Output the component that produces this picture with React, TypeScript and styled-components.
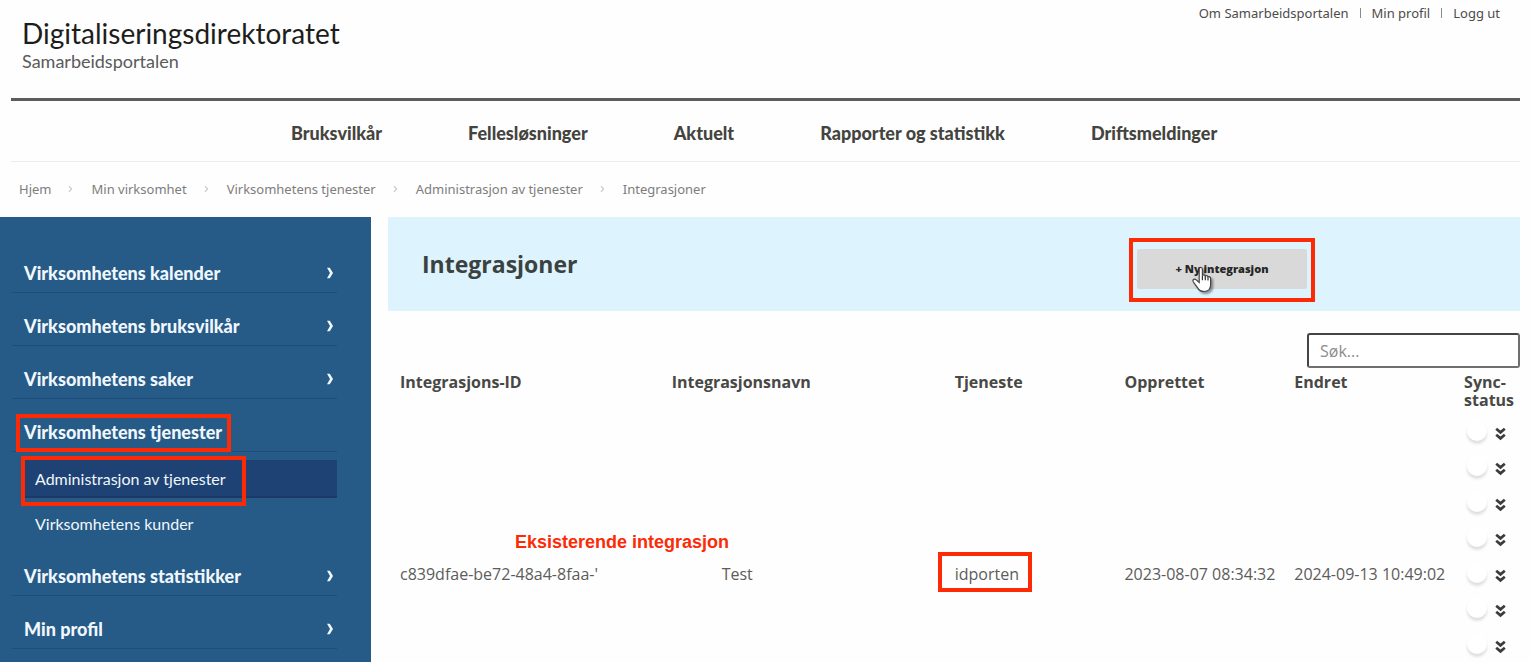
import React from "react";
import styled, { createGlobalStyle, css } from "styled-components";

const geo = `Lato, "Open Sans", sans-serif`;
const sans = `"Open Sans", "Noto Sans", sans-serif`;
const small = `"Noto Sans", "Open Sans", sans-serif`;
const red = "#fc2a05";

const GlobalStyle = createGlobalStyle`
  *, *::before, *::after { box-sizing: border-box; }
  body { margin: 0; background: #fefefe; color: #44443f; font-family: ${sans}; }
  a { color: inherit; text-decoration: none; }
  ul, ol { list-style: none; margin: 0; padding: 0; }
  h1, h2, p { margin: 0; }
`;

const Page = styled.div`
  display: flex;
  flex-direction: column;
  min-height: 100vh;
`;

const Header = styled.header`
  display: flex;
  justify-content: space-between;
  align-items: flex-start;
  margin: 0 10px 0 11px;
  height: 101px;
  border-bottom: 3px solid #5c5c5e;
`;

const Brand = styled.a`
  display: flex;
  flex-direction: column;
  padding: 17px 0 0 11px;
  font-family: ${geo};
`;

const BrandName = styled.span`
  font-size: 28px;
  line-height: 32px;
  color: #1d1d1b;
`;

const BrandSub = styled.span`
  font-size: 18px;
  line-height: 24px;
  color: #5a5a5a;
`;

const TopLinks = styled.ul`
  display: flex;
  padding: 3px 20px 0 0;
  font-family: ${small};
  font-size: 13px;
  line-height: 20px;
  color: #4c4c4a;
`;

const TopLink = styled.li`
  display: flex;
  align-items: center;
  & + &::before {
    content: "";
    width: 1px;
    height: 10px;
    margin: 0 11px;
    background: #8a8a88;
  }
`;

const MainNav = styled.nav`
  margin: 0 10px 0 11px;
  height: 61px;
  padding: 0 0 0 280px;
  border-bottom: 1px solid #ececec;
`;

const NavList = styled.ul`
  display: flex;
  align-items: center;
  height: 60px;
  padding-top: 3px;
  gap: 86px;
  font: 900 18px/24px ${geo};
  white-space: nowrap;
`;

const Crumbs = styled.ol`
  display: flex;
  align-items: flex-start;
  height: 55px;
  padding: 17px 20px 0 19px;
  font-family: ${small};
  font-size: 13px;
  line-height: 20px;
  color: #7d7d7b;
`;

const Crumb = styled.li`
  display: flex;
  align-items: center;
  svg { margin: 0 18px 0 17px; }
`;

const Columns = styled.div`
  flex: 1;
  display: grid;
  grid-template-columns: 371px minmax(0, 1fr);
  gap: 17px;
`;

const Sidebar = styled.nav`
  background: #265a87;
  padding: 23px 34px 0 12px;
  color: #f0f7fc;
  font-family: ${geo};
`;

const SideLink = styled.a`
  display: flex;
  align-items: center;
  justify-content: space-between;
  height: 53px;
  padding: 14px 3px 0 12px;
  border-bottom: 1px solid #1f4d7b;
  font-size: 18px;
  line-height: 24px;
  font-weight: 900;
`;

const SubList = styled.ul`
  display: grid;
  gap: 7px;
  padding: 8px 0 0 10px;
`;

const SubLink = styled.a<{ $active?: boolean }>`
  display: block;
  height: 38px;
  padding: 7px 0 0 13px;
  font-size: 16px;
  line-height: 24px;
  ${(p) =>
    p.$active &&
    css`
      background: #1e4273;
      border-bottom: 2px solid #1a3966;
    `}
`;

/* Red frame drawn round the marked element without affecting its layout. */
const Marked = styled.span<{ $inset: string }>`
  position: relative;
  &::after {
    content: "";
    position: absolute;
    inset: ${(p) => p.$inset};
    border: 4px solid ${red};
    pointer-events: none;
  }
`;

const Content = styled.main`
  display: flex;
  flex-direction: column;
  padding-right: 10px;
`;

const Banner = styled.div`
  display: flex;
  align-items: center;
  justify-content: space-between;
  height: 94px;
  padding: 0 213px 0 34px;
  background: #ddf4fe;
`;

const Title = styled.h1`
  font-size: 23px;
  line-height: 32px;
  font-weight: 700;
  color: #3b413f;
`;

const ButtonFrame = styled(Marked)`
  display: block;
  margin-top: 9px;
`;

const NewButton = styled.button`
  display: block;
  width: 170px;
  height: 40px;
  padding: 0;
  border: 0;
  border-radius: 2px;
  background: #d9d9d9;
  color: #262626;
  font: 800 11px/16px ${sans};
`;

const Hand = styled.svg`
  position: absolute;
  left: 54px;
  top: 17px;
  filter: drop-shadow(2px 2px 1px rgba(0, 0, 0, 0.4));
`;

const Search = styled.input`
  align-self: flex-end;
  width: 213px;
  height: 35px;
  margin: 22px 0 4px;
  padding: 0 11px;
  border: 2px solid #6f6f6f;
  border-top-color: #444;
  border-left-color: #444;
  border-radius: 3px;
  background: #fff;
  font: 16px/24px ${sans};
  &::placeholder { color: #8c8c8c; opacity: 1; }
`;

const Table = styled.table`
  width: 100%;
  table-layout: fixed;
  border-collapse: collapse;
  font-size: 16px;
  color: #5c5c5a;
`;

const HeadCell = styled.th<{ $w: number }>`
  width: ${(p) => p.$w}%;
  height: 40px;
  padding: 1px 0 0 12px;
  text-align: left;
  vertical-align: top;
  line-height: 18px;
  font-weight: 700;
  color: #484845;
`;

const Row = styled.tr`
  height: 36px;
  &:nth-child(odd) { height: 35px; }
`;

const Cell = styled.td`
  position: relative;
  padding: 8px 0 0 12px;
  vertical-align: top;
  line-height: 24px;
  white-space: nowrap;
`;

const Hidden = styled.span`
  display: inline-block;
  width: 50px;
`;

const Note = styled.strong`
  position: absolute;
  left: 127px;
  top: -24px;
  font: 700 18px/24px "Liberation Sans", Arial, sans-serif;
  color: ${red};
`;

const Status = styled.div`
  display: flex;
  align-items: center;
  height: 27px;
  padding-left: 3px;
  gap: 8px;
`;

const Knob = styled.input`
  appearance: none;
  width: 20px;
  height: 20px;
  margin: -6px 0 0;
  border-radius: 50%;
  background: #fff;
  box-shadow: 0 3px 3px rgba(0, 0, 0, 0.13);
`;

const Expand = styled.button`
  display: flex;
  padding: 0;
  border: 0;
  background: none;
  color: #3c3c3c;
`;

const Arrow = () => (
  <svg width="8" height="12" viewBox="0 0 8 12" aria-hidden="true">
    <path d="M1 .8H3.800L7 6 3.800 11.200H1L4 6z" fill="currentColor" />
  </svg>
);

const CrumbArrow = () => (
  <svg width="5" height="8" viewBox="0 0 5 8" aria-hidden="true">
    <path d="M1 1.2 3.6 4 1 6.8" fill="none" stroke="#c8c8c8" strokeWidth="1.2" />
  </svg>
);

const DoubleDown = () => (
  <svg width="11" height="14" viewBox="0 0 11 14" aria-hidden="true">
    <path
      d="M1.2 1.8 5.5 5.4 9.8 1.8M1.2 7.8 5.5 11.4 9.8 7.8"
      fill="none"
      stroke="currentColor"
      strokeWidth="2.7"
    />
  </svg>
);

const nav = ["Bruksvilkår", "Fellesløsninger", "Aktuelt", "Rapporter og statistikk", "Driftsmeldinger"];
const crumbs = ["Hjem", "Min virksomhet", "Virksomhetens tjenester", "Administrasjon av tjenester", "Integrasjoner"];
const side = [
  "Virksomhetens kalender",
  "Virksomhetens bruksvilkår",
  "Virksomhetens saker",
  "Virksomhetens tjenester",
  "Virksomhetens statistikker",
  "Min profil",
];
const heads: [string, number][] = [
  ["Integrasjons-ID", 24],
  ["Integrasjonsnavn", 25],
  ["Tjeneste", 15],
  ["Opprettet", 15],
  ["Endret", 15],
  ["Sync-status", 6],
];
const existing = {
  id: "c839dfae-be72-48a4-8faa-'",
  name: "Test",
  service: "idporten",
  created: "2023-08-07 08:34:32",
  changed: "2024-09-13 10:49:02",
};
const rows = [null, null, null, null, existing, null, null];

export default function App() {
  return (
    <Page>
      <GlobalStyle />
      <Header>
        <Brand href="#">
          <BrandName>Digitaliseringsdirektoratet</BrandName>
          <BrandSub>Samarbeidsportalen</BrandSub>
        </Brand>
        <TopLinks>
          {["Om Samarbeidsportalen", "Min profil", "Logg ut"].map((t) => (
            <TopLink key={t}><a href="#">{t}</a></TopLink>
          ))}
        </TopLinks>
      </Header>
      <MainNav>
        <NavList>
          {nav.map((t) => <li key={t}><a href="#">{t}</a></li>)}
        </NavList>
      </MainNav>
      <Crumbs>
        {crumbs.map((t, i) => (
          <Crumb key={t}>
            <a href="#">{t}</a>
            {i < crumbs.length - 1 && <CrumbArrow />}
          </Crumb>
        ))}
      </Crumbs>
      <Columns>
        <Sidebar>
          <ul>
            {side.map((t) =>
              t === "Virksomhetens tjenester" ? (
                <li key={t}>
                  <SideLink href="#"><Marked $inset="-6px -9px -8px -8px">{t}</Marked></SideLink>
                  <SubList>
                    <li>
                      <SubLink href="#" $active>
                        <Marked $inset="-13px -20px -18px -14px">Administrasjon av tjenester</Marked>
                      </SubLink>
                    </li>
                    <li><SubLink href="#">Virksomhetens kunder</SubLink></li>
                  </SubList>
                </li>
              ) : (
                <li key={t}>
                  <SideLink href="#">{t}<Arrow /></SideLink>
                </li>
              )
            )}
          </ul>
        </Sidebar>
        <Content>
          <Banner>
            <Title>Integrasjoner</Title>
            <ButtonFrame $inset="-11px -8px -13px -8px">
              <NewButton type="button">+ Ny integrasjon</NewButton>
              <Hand width="22" height="27" viewBox="0 0 22 27" aria-hidden="true">
                <path
                  d="M8.2 16.5V3.4c0-2.6 3.2-2.6 3.2 0v6.2c.6-1.2 2.7-1 2.9.6.7-1 2.5-.7 2.7.8.9-.7 2.6-.2 2.6 1.5v6.2c0 4.2-2.7 6.8-6.6 6.8-3.2 0-5-1.2-6.3-3.6L2.2 15.8c-1.2-2.2 1.5-3.6 3-1.9z"
                  fill="#fff"
                  stroke="#444"
                  strokeWidth="1.2"
                />
                <path d="M11.4 9.6v4.6M14.3 10.3v4M17 11.2v3.4" stroke="#333" strokeWidth="1.2" />
              </Hand>
            </ButtonFrame>
          </Banner>
          <Search type="search" placeholder="Søk..." aria-label="Søk" />
          <Table>
            <thead>
              <tr>{heads.map(([t, w]) => <HeadCell key={t} $w={w} scope="col">{t}</HeadCell>)}</tr>
            </thead>
            <tbody>
              {rows.map((r, i) => (
                <Row key={i}>
                  <Cell>{r && <>{r.id}<Note>Eksisterende integrasjon</Note></>}</Cell>
                  <Cell>{r && <><Hidden />{r.name}</>}</Cell>
                  <Cell>{r && <Marked $inset="-11px -13px -7px -17px">{r.service}</Marked>}</Cell>
                  <Cell>{r?.created}</Cell>
                  <Cell>{r?.changed}</Cell>
                  <Cell>
                    <Status>
                      <Knob type="checkbox" aria-label="Sync-status" />
                      <Expand type="button" aria-label="Vis detaljer"><DoubleDown /></Expand>
                    </Status>
                  </Cell>
                </Row>
              ))}
            </tbody>
          </Table>
        </Content>
      </Columns>
    </Page>
  );
}
